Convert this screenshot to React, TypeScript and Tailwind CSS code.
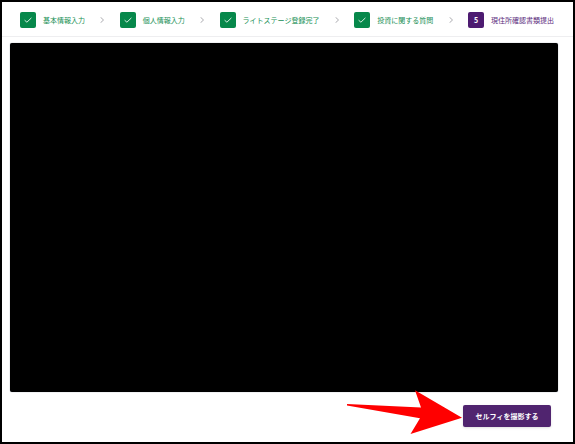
const steps = [
  { label: "基本情報入力", done: true },
  { label: "個人情報入力", done: true },
  { label: "ライトステージ登録完了", done: true },
  { label: "投資に関する質問", done: true },
  { label: "現住所確認書類提出", done: false },
];

function CheckIcon() {
  return (
    <svg viewBox="0 0 8 8" className="w-2 h-2" fill="none" stroke="#d9efe3" strokeWidth="1" aria-hidden="true">
      <path d="M0.6 4.2 L2.9 6.2 L7.4 1.9" />
    </svg>
  );
}

function Chevron() {
  return (
    <svg viewBox="0 0 4 6" className="w-1 h-1.5 shrink-0" fill="none" stroke="#a4a4a8" strokeWidth="0.9" aria-hidden="true">
      <path d="M0.5 0.2 L3.5 3 L0.5 5.8" />
    </svg>
  );
}

function Step({ label, number, done }: { label: string; number: number; done: boolean }) {
  return (
    <div className="flex items-center gap-[7px]">
      <span
        className={`w-4 h-4 rounded-xs flex items-center justify-center text-[7px] font-bold text-white ${
          done ? "bg-[#07884b]" : "bg-[#4d1b71]"
        }`}
      >
        {done ? <CheckIcon /> : number}
      </span>
      <span className={`text-[7px] leading-4 whitespace-nowrap ${done ? "text-[#168f55]" : "text-[#5a2a7c]"}`}>
        {label}
      </span>
    </div>
  );
}

export default function App() {
  return (
    <div className="min-h-screen flex flex-col border-2 border-black bg-white font-['Noto_Sans_CJK_JP',sans-serif]">
      <ol className="flex items-center justify-between pl-[18px] pr-[19px] pt-[10px] pb-2 border-b border-[#eeeef0]">
        {steps.map((step, idx) => (
          <li key={step.label} className="contents">
            {idx > 0 && <Chevron />}
            <Step label={step.label} number={idx + 1} done={step.done} />
          </li>
        ))}
      </ol>

      {/* Camera preview */}
      <main className="flex-1 mt-1.5 ml-2 mr-[15px] rounded-xs bg-black shadow-[0_0_1px_#6b7280]"></main>

      <footer className="flex justify-end pt-[13px] pb-[15px] pr-[22px]">
        <div className="relative flex">
          <svg
            viewBox="0 0 116 44"
            className="absolute right-full -top-[15px] w-[116px] h-11 max-w-none"
            fill="#ff0000"
            aria-hidden="true"
          >
            <path d="M0 14 L74 17.6 L68 0.3 L115 27.7 L63.5 44 L73 28.3 L0 15.4 Z" />
          </svg>
          <button
            type="button"
            className="w-22 h-[22px] rounded-xs bg-[#50246f] text-white text-[7px] font-bold whitespace-nowrap shadow-sm cursor-pointer"
          >
            セルフィを撮影する
          </button>
        </div>
      </footer>
    </div>
  );
}
